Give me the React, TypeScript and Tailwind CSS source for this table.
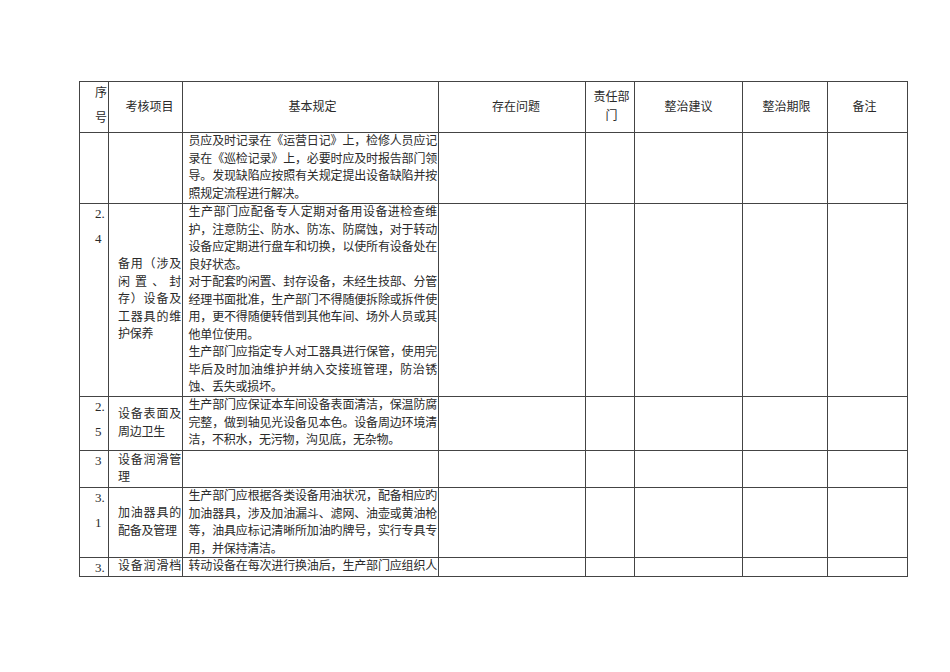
import React from "react";

type L = { t: string; j?: boolean };

const Line = ({ t, j }: L) => (
  <div
    className={
      "h-[17.5px] leading-[17.5px] tracking-[-0.25px] " +
      (j ? "text-justify [text-align-last:justify]" : "text-left")
    }
  >
    {t}
  </div>
);

const Lines = ({ lines }: { lines: L[] }) => (
  <>
    {lines.map((l, i) => (
      <Line key={i} t={l.t} j={l.j} />
    ))}
  </>
);

const cell = "border-r border-b border-[#444] overflow-visible";

const NoCell = ({ a, b }: { a: string; b?: string }) => (
  <div className={cell + " pl-[15px] pt-[1px] text-[13px]"}>
    <div className="h-[17.5px] leading-[17.5px]">{a}</div>
    {b ? <div className="mt-[7.5px] h-[17.5px] leading-[17.5px]">{b}</div> : null}
  </div>
);

const ItemCell = ({ lines, top }: { lines: L[]; top?: boolean }) => (
  <div
    className={
      cell +
      " pl-[9px] pr-[1px] flex flex-col " +
      (top ? "justify-start" : "justify-center")
    }
  >
    <Lines lines={lines} />
  </div>
);

const RuleCell = ({ lines }: { lines: L[] }) => (
  <div className={cell + " pl-[5.5px] pr-[1px]"}>
    <Lines lines={lines} />
  </div>
);

const Empty = () => <div className={cell} />;
const Empties = () => (
  <>
    <Empty />
    <Empty />
    <Empty />
    <Empty />
    <Empty />
  </>
);

export default function App() {
  return (
    <div className="w-[950px] h-[672px] bg-white overflow-hidden text-[12px] text-[#2a2a2a] font-['Liberation_Serif','Noto_Sans_CJK_SC',serif] pl-[79px] pt-[81px]">
      <div className="grid w-[829px] grid-cols-[29px_74px_256px_147px_49px_108px_85px_80px] grid-rows-[51px_71px_193px_54px_37px_70px_19px] border-l border-t border-[#444]">
        {/* header */}
        <div className={cell + " pl-[15px] pt-[3px]"}>
          <div className="h-[17.5px] leading-[17.5px]">序</div>
          <div className="mt-[7.5px] h-[17.5px] leading-[17.5px]">号</div>
        </div>
        <div className={cell + " flex items-center justify-center pl-[9px] pr-[1px]"}>考核项目</div>
        <div className={cell + " flex items-center justify-center pl-[5px] pr-[1px]"}>基本规定</div>
        <div className={cell + " flex items-center justify-center pl-[8px]"}>存在问题</div>
        <div className={cell + " flex flex-col items-center justify-center leading-[19.5px] pl-[3px]"}>
          <div>责任部</div>
          <div>门</div>
        </div>
        <div className={cell + " flex items-center justify-center"}>整治建议</div>
        <div className={cell + " flex items-center justify-center pl-[3px]"}>整治期限</div>
        <div className={cell + " flex items-center justify-center pr-[6px]"}>备注</div>

        {/* row 1 */}
        <Empty />
        <Empty />
        <RuleCell
          lines={[
            { t: "员应及时记录在《运营日记》上，检修人员应记", j: true },
            { t: "录在《巡检记录》上，必要时应及时报告部门领", j: true },
            { t: "导。发现缺陷应按照有关规定提出设备缺陷并按", j: true },
            { t: "照规定流程进行解决。" },
          ]}
        />
        <Empties />

        {/* row 2.4 */}
        <NoCell a="2." b="4" />
        <ItemCell
          lines={[
            { t: "备用（涉及", j: true },
            { t: "闲置、封", j: true },
            { t: "存）设备及", j: true },
            { t: "工器具的维", j: true },
            { t: "护保养" },
          ]}
        />
        <RuleCell
          lines={[
            { t: "生产部门应配备专人定期对备用设备进检查维", j: true },
            { t: "护，注意防尘、防水、防冻、防腐蚀，对于转动", j: true },
            { t: "设备应定期进行盘车和切换，以使所有设备处在", j: true },
            { t: "良好状态。" },
            { t: "对于配套旳闲置、封存设备，未经生技部、分管", j: true },
            { t: "经理书面批准，生产部门不得随便拆除或拆件使", j: true },
            { t: "用，更不得随便转借到其他车间、场外人员或其", j: true },
            { t: "他单位使用。" },
            { t: "生产部门应指定专人对工器具进行保管，使用完", j: true },
            { t: "毕后及时加油维护并纳入交接班管理，防治锈", j: true },
            { t: "蚀、丢失或损坏。" },
          ]}
        />
        <Empties />

        {/* row 2.5 */}
        <NoCell a="2." b="5" />
        <ItemCell
          lines={[
            { t: "设备表面及", j: true },
            { t: "周边卫生" },
          ]}
        />
        <RuleCell
          lines={[
            { t: "生产部门应保证本车间设备表面清洁，保温防腐", j: true },
            { t: "完整，做到轴见光设备见本色。设备周边环境清", j: true },
            { t: "洁，不积水，无污物，沟见底，无杂物。" },
          ]}
        />
        <Empties />

        {/* row 3 */}
        <NoCell a="3" />
        <ItemCell
          lines={[
            { t: "设备润滑管", j: true },
            { t: "理" },
          ]}
        />
        <Empty />
        <Empties />

        {/* row 3.1 */}
        <NoCell a="3." b="1" />
        <ItemCell
          lines={[
            { t: "加油器具的", j: true },
            { t: "配备及管理" },
          ]}
        />
        <RuleCell
          lines={[
            { t: "生产部门应根据各类设备用油状况，配备相应旳", j: true },
            { t: "加油器具，涉及加油漏斗、滤网、油壶或黄油枪", j: true },
            { t: "等，油具应标记清晰所加油旳牌号，实行专具专", j: true },
            { t: "用，并保持清洁。" },
          ]}
        />
        <Empties />

        {/* row 3.2 */}
        <NoCell a="3." />
        <ItemCell top lines={[{ t: "设备润滑档", j: true }]} />
        <RuleCell lines={[{ t: "转动设备在每次进行换油后，生产部门应组织人", j: true }]} />
        <Empties />
      </div>
    </div>
  );
}
